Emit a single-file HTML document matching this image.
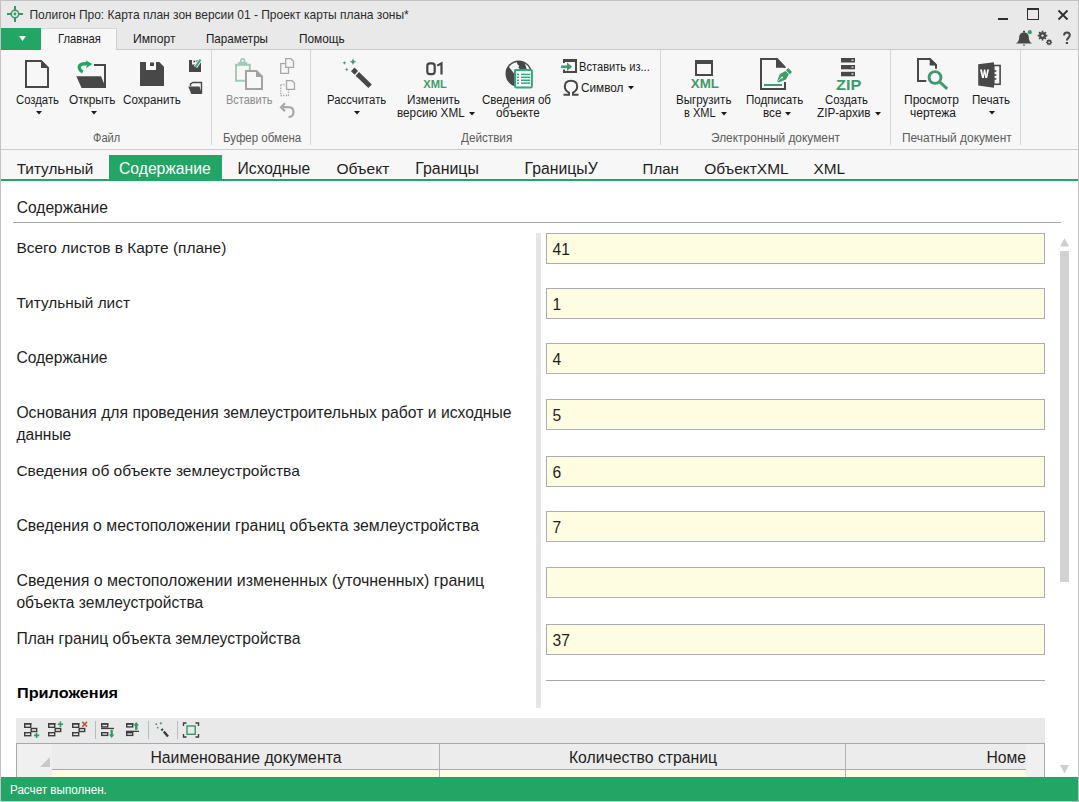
<!DOCTYPE html>
<html><head><meta charset="utf-8"><style>
html,body{margin:0;padding:0;width:1079px;height:802px;overflow:hidden;background:#fff}
body{position:relative;font-family:"Liberation Sans",sans-serif}
body>div{position:absolute}
.t{white-space:nowrap;line-height:1}
</style></head><body>
<div style="left:0px;top:0px;width:1079px;height:802px;background:#ffffff"></div>
<div style="left:1px;top:1px;width:1077px;height:48px;background:#e9e9e9"></div>
<div style="left:1px;top:50px;width:1077px;height:99px;background:#f7f7f7"></div>
<div style="left:1px;top:149px;width:1077px;height:1px;background:#cdcdcd"></div>
<div style="left:1px;top:150px;width:1077px;height:29px;background:#f7f7f7"></div>
<div class="t" style="left:29.50px;top:8.85px;font-size:11.99px;color:#2b2b2b;">Полигон Про: Карта план зон версии 01 - Проект карты плана зоны*</div>
<div style="left:1px;top:28px;width:40px;height:22px;background:#22a565"></div>
<div style="left:41px;top:28px;width:76px;height:22px;background:#f7f7f7;border-top:1px solid #d8d8d8;border-right:1px solid #d0d0d0;box-sizing:border-box"></div>
<div style="left:117px;top:49px;width:961px;height:1px;background:#c9c9c9"></div>
<svg style="position:absolute;left:19px;top:36px" width="8" height="6" viewBox="0 0 8 6"><path d="M0,0 H7 L3.5,5 Z" fill="#fff"/></svg>
<div class="t" style="left:57.50px;top:33.10px;font-size:12.40px;color:#1a1a1a;transform:scaleX(0.9071);transform-origin:0 0;">Главная</div>
<div class="t" style="left:132.50px;top:33.10px;font-size:12.40px;color:#1a1a1a;transform:scaleX(0.9807);transform-origin:0 0;">Импорт</div>
<div class="t" style="left:205.50px;top:33.10px;font-size:12.40px;color:#1a1a1a;transform:scaleX(0.9381);transform-origin:0 0;">Параметры</div>
<div class="t" style="left:298.80px;top:33.10px;font-size:12.40px;color:#1a1a1a;transform:scaleX(0.9569);transform-origin:0 0;">Помощь</div>
<div style="left:211px;top:50px;width:1px;height:95px;background:#d6d6d6"></div>
<div style="left:310px;top:50px;width:1px;height:95px;background:#d6d6d6"></div>
<div style="left:660px;top:50px;width:1px;height:95px;background:#d6d6d6"></div>
<div style="left:890px;top:50px;width:1px;height:95px;background:#d6d6d6"></div>
<div style="left:1020px;top:50px;width:1px;height:95px;background:#d6d6d6"></div>
<div class="t" style="left:16.00px;top:94.29px;font-size:12.30px;color:#1a1a1a;transform:scaleX(0.9200);transform-origin:0 0;">Создать</div>
<div class="t" style="left:68.80px;top:94.29px;font-size:12.30px;color:#1a1a1a;transform:scaleX(0.9611);transform-origin:0 0;">Открыть</div>
<div class="t" style="left:123.00px;top:94.29px;font-size:12.30px;color:#1a1a1a;transform:scaleX(0.9455);transform-origin:0 0;">Сохранить</div>
<div class="t" style="left:225.60px;top:94.29px;font-size:12.30px;color:#8c8c8c;transform:scaleX(0.8897);transform-origin:0 0;">Вставить</div>
<div class="t" style="left:326.70px;top:94.29px;font-size:12.30px;color:#1a1a1a;transform:scaleX(0.9236);transform-origin:0 0;">Рассчитать</div>
<div class="t" style="left:406.70px;top:94.29px;font-size:12.30px;color:#1a1a1a;transform:scaleX(0.9554);transform-origin:0 0;">Изменить</div>
<div class="t" style="left:396.70px;top:107.29px;font-size:12.30px;color:#1a1a1a;transform:scaleX(0.9531);transform-origin:0 0;">версию XML</div>
<div class="t" style="left:482.00px;top:94.29px;font-size:12.30px;color:#1a1a1a;transform:scaleX(0.9389);transform-origin:0 0;">Сведения об</div>
<div class="t" style="left:495.60px;top:107.29px;font-size:12.30px;color:#1a1a1a;transform:scaleX(0.9569);transform-origin:0 0;">объекте</div>
<div class="t" style="left:579.00px;top:61.29px;font-size:12.30px;color:#1a1a1a;transform:scaleX(0.9043);transform-origin:0 0;">Вставить из...</div>
<div class="t" style="left:581.00px;top:82.29px;font-size:12.30px;color:#1a1a1a;transform:scaleX(0.9585);transform-origin:0 0;">Символ</div>
<div class="t" style="left:676.00px;top:94.29px;font-size:12.30px;color:#1a1a1a;transform:scaleX(0.9403);transform-origin:0 0;">Выгрузить</div>
<div class="t" style="left:684.00px;top:107.29px;font-size:12.30px;color:#1a1a1a;transform:scaleX(0.8967);transform-origin:0 0;">в XML</div>
<div class="t" style="left:745.60px;top:94.29px;font-size:12.30px;color:#1a1a1a;transform:scaleX(0.9428);transform-origin:0 0;">Подписать</div>
<div class="t" style="left:762.80px;top:107.29px;font-size:12.30px;color:#1a1a1a;transform:scaleX(0.9550);transform-origin:0 0;">все</div>
<div class="t" style="left:825.00px;top:94.29px;font-size:12.30px;color:#1a1a1a;transform:scaleX(0.9200);transform-origin:0 0;">Создать</div>
<div class="t" style="left:817.00px;top:107.29px;font-size:12.30px;color:#1a1a1a;transform:scaleX(0.9515);transform-origin:0 0;">ZIP-архив</div>
<div class="t" style="left:904.00px;top:94.29px;font-size:12.30px;color:#1a1a1a;transform:scaleX(0.9795);transform-origin:0 0;">Просмотр</div>
<div class="t" style="left:910.00px;top:107.29px;font-size:12.30px;color:#1a1a1a;transform:scaleX(0.9765);transform-origin:0 0;">чертежа</div>
<div class="t" style="left:971.60px;top:94.29px;font-size:12.30px;color:#1a1a1a;transform:scaleX(0.9433);transform-origin:0 0;">Печать</div>
<div class="t" style="left:93.30px;top:132.29px;font-size:12.30px;color:#5c5c5c;transform:scaleX(0.8989);transform-origin:0 0;">Файл</div>
<div class="t" style="left:222.50px;top:132.29px;font-size:12.30px;color:#5c5c5c;transform:scaleX(0.9350);transform-origin:0 0;">Буфер обмена</div>
<div class="t" style="left:461.00px;top:132.29px;font-size:12.30px;color:#5c5c5c;transform:scaleX(0.9504);transform-origin:0 0;">Действия</div>
<div class="t" style="left:711.00px;top:132.29px;font-size:12.30px;color:#5c5c5c;transform:scaleX(0.9680);transform-origin:0 0;">Электронный документ</div>
<div class="t" style="left:901.80px;top:132.29px;font-size:12.30px;color:#5c5c5c;transform:scaleX(0.9708);transform-origin:0 0;">Печатный документ</div>
<svg style="position:absolute;left:35.5px;top:111px" width="6" height="4" viewBox="0 0 6 4"><path d="M0,0 H6 L3,3.4 Z" fill="#1a1a1a"/></svg>
<svg style="position:absolute;left:91.0px;top:111px" width="6" height="4" viewBox="0 0 6 4"><path d="M0,0 H6 L3,3.4 Z" fill="#1a1a1a"/></svg>
<svg style="position:absolute;left:353.5px;top:111px" width="6" height="4" viewBox="0 0 6 4"><path d="M0,0 H6 L3,3.4 Z" fill="#1a1a1a"/></svg>
<svg style="position:absolute;left:469.0px;top:112px" width="6" height="4" viewBox="0 0 6 4"><path d="M0,0 H6 L3,3.4 Z" fill="#1a1a1a"/></svg>
<svg style="position:absolute;left:627.5px;top:86px" width="6" height="4" viewBox="0 0 6 4"><path d="M0,0 H6 L3,3.4 Z" fill="#1a1a1a"/></svg>
<svg style="position:absolute;left:721.0px;top:112px" width="6" height="4" viewBox="0 0 6 4"><path d="M0,0 H6 L3,3.4 Z" fill="#1a1a1a"/></svg>
<svg style="position:absolute;left:784.8px;top:112px" width="6" height="4" viewBox="0 0 6 4"><path d="M0,0 H6 L3,3.4 Z" fill="#1a1a1a"/></svg>
<svg style="position:absolute;left:874.9px;top:112px" width="6" height="4" viewBox="0 0 6 4"><path d="M0,0 H6 L3,3.4 Z" fill="#1a1a1a"/></svg>
<svg style="position:absolute;left:988.5px;top:111px" width="6" height="4" viewBox="0 0 6 4"><path d="M0,0 H6 L3,3.4 Z" fill="#1a1a1a"/></svg>
<div style="left:109px;top:155px;width:113px;height:24px;background:#22a565"></div>
<div style="left:1px;top:179px;width:1077px;height:2px;background:#22a565"></div>
<div class="t" style="left:16.70px;top:161.03px;font-size:15.32px;color:#1e1e1e;">Титульный</div>
<div class="t" style="left:119.00px;top:160.71px;font-size:15.71px;color:#ffffff;">Содержание</div>
<div class="t" style="left:237.60px;top:160.77px;font-size:15.63px;color:#1e1e1e;">Исходные</div>
<div class="t" style="left:336.40px;top:160.85px;font-size:15.54px;color:#1e1e1e;">Объект</div>
<div class="t" style="left:415.20px;top:160.50px;font-size:15.95px;color:#1e1e1e;">Границы</div>
<div class="t" style="left:524.60px;top:160.64px;font-size:15.78px;color:#1e1e1e;">ГраницыУ</div>
<div class="t" style="left:642.60px;top:161.25px;font-size:15.06px;color:#1e1e1e;">План</div>
<div class="t" style="left:704.20px;top:160.90px;font-size:15.48px;color:#1e1e1e;">ОбъектXML</div>
<div class="t" style="left:813.40px;top:160.98px;font-size:15.38px;color:#1e1e1e;">XML</div>
<div class="t" style="left:16.70px;top:199.79px;font-size:15.60px;color:#1e1e1e;">Содержание</div>
<div style="left:13px;top:222px;width:1048px;height:1px;background:#a8a8a8"></div>
<div style="left:536px;top:233px;width:5px;height:475px;background:#e6e6e6"></div>
<div class="t" style="left:16.40px;top:239.90px;font-size:15.48px;color:#1e1e1e;">Всего листов в Карте (плане)</div>
<div style="left:546px;top:233px;width:499px;height:31px;background:#fefde1;border:1px solid #aaacb4;box-sizing:border-box"></div>
<div class="t" style="left:552.50px;top:241.79px;font-size:15.60px;color:#1e1e1e;">41</div>
<div class="t" style="left:16.40px;top:294.98px;font-size:15.38px;color:#1e1e1e;">Титульный лист</div>
<div style="left:546px;top:288px;width:499px;height:31px;background:#fefde1;border:1px solid #aaacb4;box-sizing:border-box"></div>
<div class="t" style="left:552.50px;top:296.79px;font-size:15.60px;color:#1e1e1e;">1</div>
<div class="t" style="left:16.40px;top:349.79px;font-size:15.60px;color:#1e1e1e;">Содержание</div>
<div style="left:546px;top:343px;width:499px;height:31px;background:#fefde1;border:1px solid #aaacb4;box-sizing:border-box"></div>
<div class="t" style="left:552.50px;top:351.79px;font-size:15.60px;color:#1e1e1e;">4</div>
<div class="t" style="left:16.40px;top:404.68px;font-size:15.73px;color:#1e1e1e;">Основания для проведения землеустроительных работ и исходные</div>
<div class="t" style="left:16.40px;top:426.79px;font-size:15.60px;color:#1e1e1e;">данные</div>
<div style="left:546px;top:399px;width:499px;height:31px;background:#fefde1;border:1px solid #aaacb4;box-sizing:border-box"></div>
<div class="t" style="left:552.50px;top:407.79px;font-size:15.60px;color:#1e1e1e;">5</div>
<div class="t" style="left:16.40px;top:462.83px;font-size:15.55px;color:#1e1e1e;">Сведения об объекте землеустройства</div>
<div style="left:546px;top:456px;width:499px;height:31px;background:#fefde1;border:1px solid #aaacb4;box-sizing:border-box"></div>
<div class="t" style="left:552.50px;top:464.79px;font-size:15.60px;color:#1e1e1e;">6</div>
<div class="t" style="left:16.40px;top:517.60px;font-size:15.83px;color:#1e1e1e;">Сведения о местоположении границ объекта землеустройства</div>
<div style="left:546px;top:511px;width:499px;height:31px;background:#fefde1;border:1px solid #aaacb4;box-sizing:border-box"></div>
<div class="t" style="left:552.50px;top:519.79px;font-size:15.60px;color:#1e1e1e;">7</div>
<div class="t" style="left:16.40px;top:573.49px;font-size:15.96px;color:#1e1e1e;">Сведения о местоположении измененных (уточненных) границ</div>
<div class="t" style="left:16.40px;top:594.79px;font-size:15.60px;color:#1e1e1e;">объекта землеустройства</div>
<div style="left:546px;top:567px;width:499px;height:31px;background:#fefde1;border:1px solid #aaacb4;box-sizing:border-box"></div>
<div class="t" style="left:16.40px;top:630.72px;font-size:15.69px;color:#1e1e1e;">План границ объекта землеустройства</div>
<div style="left:546px;top:624px;width:499px;height:31px;background:#fefde1;border:1px solid #aaacb4;box-sizing:border-box"></div>
<div class="t" style="left:552.50px;top:632.79px;font-size:15.60px;color:#1e1e1e;">37</div>
<div style="left:546px;top:680px;width:499px;height:1px;background:#a8a8a8"></div>
<div class="t" style="left:16.60px;top:685.16px;font-size:15.40px;color:#000000;font-weight:bold;transform:scaleX(1.0565);transform-origin:0 0;">Приложения</div>
<div style="left:16px;top:718px;width:1029px;height:25px;background:#e9e9e9"></div>
<div style="left:16px;top:743px;width:1029px;height:34px;background:#ffffff;border:1px solid #a7a9b1;border-bottom:none;box-sizing:border-box"></div>
<div style="left:17px;top:744px;width:1027px;height:25px;background:#ececec"></div>
<div style="left:52px;top:769px;width:974px;height:1px;background:#a9a9a9"></div>
<div style="left:1026px;top:744px;width:18px;height:33px;background:#f0f0f0"></div>
<div style="left:17px;top:744px;width:35px;height:33px;background:#f0f0f0"></div>
<div style="left:52px;top:769px;width:1px;height:8px;background:#a9abb3"></div>
<div style="left:52px;top:770px;width:974px;height:7px;background:#fefde3"></div>
<div style="left:439px;top:744px;width:1px;height:33px;background:#b0b0b0"></div>
<div style="left:845px;top:744px;width:1px;height:33px;background:#b0b0b0"></div>
<svg style="position:absolute;left:40px;top:757px" width="11" height="11" viewBox="0 0 11 11"><path d="M10,0 V10 H0 Z" fill="#c9c9c9"/></svg>
<div class="t" style="left:150.40px;top:749.61px;font-size:15.82px;color:#1e1e1e;">Наименование документа</div>
<div class="t" style="left:568.90px;top:749.65px;font-size:15.78px;color:#1e1e1e;">Количество страниц</div>
<div class="t" style="left:986.50px;top:749.71px;font-size:15.70px;color:#1e1e1e;">Номе</div>
<svg style="position:absolute;left:1060px;top:238px" width="10" height="9" viewBox="0 0 10 9"><path d="M0,8.5 L4.5,0 L9,8.5 Z" fill="#cfcfcf"/></svg>
<div style="left:1060px;top:251px;width:9px;height:331px;background:#d2d2d2"></div>
<svg style="position:absolute;left:1060px;top:765px" width="10" height="9" viewBox="0 0 10 9"><path d="M0,0 H9 L4.5,8.5 Z" fill="#cfcfcf"/></svg>
<div style="left:1px;top:777px;width:1077px;height:24px;background:#22a565"></div>
<div class="t" style="left:9.60px;top:784.00px;font-size:12.40px;color:#ffffff;transform:scaleX(0.9409);transform-origin:0 0;">Расчет выполнен.</div>
<svg style="position:absolute;left:0;top:0" width="1079" height="802" viewBox="0 0 1079 802">
<!-- title icon -->
<g fill="#3d9466">
<circle cx="15" cy="14" r="3.7" fill="none" stroke="#3d9466" stroke-width="1.5"/>
<circle cx="15" cy="14" r="1.4"/>
<rect x="7" y="13" width="4" height="2"/><rect x="19" y="13" width="4" height="2"/>
<rect x="14" y="6" width="2" height="4"/><rect x="14" y="18" width="2" height="4"/>
</g>
<!-- window buttons -->
<rect x="998" y="18" width="10" height="2" fill="#2e2e2e"/>
<rect x="1027.5" y="9" width="11" height="10.5" fill="none" stroke="#2e2e2e" stroke-width="1"/>
<rect x="1027" y="8" width="12" height="2" fill="#2e2e2e"/>
<path d="M1058.5,10.5 L1067.5,19.5 M1067.5,10.5 L1058.5,19.5" stroke="#2e2e2e" stroke-width="1.8"/>
<!-- bell -->
<path d="M1016,43.6 C1017.8,42.2 1019.2,40.5 1019.2,37.2 C1019.2,34.2 1021,32.5 1024,32.5 C1027,32.5 1028.8,34.2 1028.8,37.2 C1028.8,40.5 1030.2,42.2 1032,43.6 Z" fill="#474747"/>
<rect x="1023" y="30.8" width="2" height="1.8" fill="#474747"/>
<rect x="1023" y="44.6" width="2" height="1" fill="#474747"/>
<circle cx="1029.8" cy="32.2" r="2.1" fill="#3aa06a"/>
<!-- gears -->
<g fill="#474747">
<circle cx="1042.5" cy="35.6" r="3.4"/>
<path d="M1042.5,30.8 V40.4 M1037.7,35.6 H1047.3 M1039.1,32.2 L1045.9,39 M1045.9,32.2 L1039.1,39" stroke="#474747" stroke-width="1.7"/>
<circle cx="1042.5" cy="35.6" r="1.2" fill="#e9e9e9"/>
<circle cx="1049.1" cy="42.3" r="2.3"/>
<path d="M1049.1,39.3 V45.3 M1046.1,42.3 H1052.1 M1047,40.2 L1051.2,44.4 M1051.2,40.2 L1047,44.4" stroke="#474747" stroke-width="1.2"/>
<circle cx="1049.1" cy="42.3" r="0.9" fill="#e9e9e9"/>
</g>
<path d="M1064.1,35.6 C1064.1,33.4 1065.4,32.4 1066.9,32.4 C1068.6,32.4 1069.8,33.6 1069.8,35.2 C1069.8,37.6 1066.9,38 1066.9,40.6" fill="none" stroke="#474747" stroke-width="2"/>
<rect x="1065.8" y="42" width="2.2" height="2" fill="#474747"/>

<!-- Создать: doc -->
<path d="M26,61 H41 L48,68 V87 H26 Z" fill="none" stroke="#484848" stroke-width="2"/>
<path d="M41,60 L49,68 H41 Z" fill="#484848"/>
<!-- Открыть -->
<path d="M94,65 H105 V88" fill="none" stroke="#484848" stroke-width="2"/>
<path d="M76.3,76.2 H101 L106,88 H81.6 Z" fill="#484848"/>
<path d="M82.8,71.8 C79.5,70.5 78.5,67.5 79.8,65.5 C81,63.8 83,63.7 85,63.7 H88.5" fill="none" stroke="#22a560" stroke-width="3.4"/>
<path d="M85.6,60.2 L92.2,64.1 L86,68.2 L87.5,64.1 Z" fill="#22a560"/>
<!-- Сохранить -->
<path d="M140,62 H159.3 L164,66.7 V86 H140 Z" fill="#484848"/>
<rect x="146" y="62" width="10" height="8" fill="#f7f7f7"/>
<rect x="150" y="62.5" width="4" height="3.5" fill="#484848"/>
<!-- small save-edit -->
<rect x="189" y="60" width="12" height="12" fill="#484848"/>
<rect x="192" y="60" width="4.5" height="4.5" fill="#f7f7f7"/>
<rect x="193.5" y="60.5" width="1.8" height="1.8" fill="#484848"/>
<path d="M195.5,67 L200.5,59.5" stroke="#f7f7f7" stroke-width="4"/>
<path d="M195.5,67 L200.5,59.5" stroke="#4aa27a" stroke-width="2.2"/>
<!-- small folder -->
<path d="M190.5,86 V84 L193,82.5 H201.5 V93.5" fill="none" stroke="#484848" stroke-width="1.4"/>
<path d="M188.3,86.6 H199.5 L202,94 H191.3 Z" fill="#484848"/>

<!-- Вставить (disabled) -->
<path d="M245,80.8 H236 V64.8 H249.8 V70" fill="none" stroke="#a3cbb4" stroke-width="2"/>
<path d="M238.2,62 H247.2 V65.5 H238.2 Z" fill="#a3cbb4"/>
<circle cx="242.7" cy="60.6" r="2.7" fill="#a3cbb4"/>
<circle cx="242.7" cy="60.8" r="1.1" fill="#f7f7f7"/>
<path d="M246,71 H256.5 L262,76.5 V89 H246 Z" fill="#f7f7f7" stroke="#a2a2a2" stroke-width="2"/>
<path d="M256,70 L263,77 H256 Z" fill="#a2a2a2"/>
<!-- copy -->
<g fill="#f7f7f7" stroke="#a8a8a8" stroke-width="1.3">
<path d="M280.7,63.7 H288.5 V73.3 H280.7 Z"/>
<path d="M285.7,58.7 H291 L293.5,61.2 V67.3 H285.7 Z"/>
<path d="M286.5,80.7 H292 L294.5,83.2 V89.3 H286.5 Z"/>
</g>
<path d="M280.7,85 V95.5 H288.5 V90" fill="none" stroke="#a8a8a8" stroke-width="1.3" stroke-dasharray="1.3,1.3"/>
<path d="M280.7,84.7 H285" fill="none" stroke="#a8a8a8" stroke-width="1.3" stroke-dasharray="1.3,1.3"/>
<path d="M283,107.2 H288.5 C292,107.2 293.5,109.5 293.5,112.3 C293.5,115 291.5,117 288.5,117" fill="none" stroke="#a8a8a8" stroke-width="2.2"/>
<path d="M285,103.3 L281,107.2 L285,111.1" fill="none" stroke="#a8a8a8" stroke-width="2.2"/>

<!-- Рассчитать: wand -->
<g fill="#3f9a6d">
<path d="M353,58.5 L354,60.7 L356.2,61.7 L354,62.7 L353,64.9 L352,62.7 L349.8,61.7 L352,60.7 Z"/>
<path d="M344.4,60.9 L345,62.2 L346.3,62.8 L345,63.4 L344.4,64.7 L343.8,63.4 L342.5,62.8 L343.8,62.2 Z"/>
<path d="M346.8,67.6 L347.4,68.9 L348.7,69.5 L347.4,70.1 L346.8,71.4 L346.2,70.1 L344.9,69.5 L346.2,68.9 Z"/>
</g>
<g transform="translate(354.6,71.2) rotate(44)">
<rect x="-2.6" y="-2.5" width="5" height="5" fill="#484848"/>
<rect x="3.8" y="-2.5" width="17.8" height="5" fill="#484848"/>
</g>
<!-- 01 XML -->
<rect x="427.3" y="63.4" width="7.4" height="10.8" rx="2.6" fill="none" stroke="#454545" stroke-width="2.2"/>
<path d="M437.2,65.6 L441.5,63.3 V74.6" fill="none" stroke="#454545" stroke-width="2.2"/>
<text x="423.3" y="87.7" font-family="Liberation Sans" font-weight="bold" font-size="11" fill="#3f9a6d" textLength="23.5" lengthAdjust="spacingAndGlyphs">XML</text>
<!-- globe -->
<circle cx="518.7" cy="73.7" r="13.2" fill="#484848"/>
<path d="M509,67 A11.6,11.6 0 0 1 516.8,62.2 L517.6,64.5 L519.1,65.8 L518.4,67.4 L519.9,69.2 H514.5 V74 Z" fill="#f7f7f7"/>
<path d="M525,63.5 A11.6,11.6 0 0 1 529.6,69 H526.6 Z" fill="#f7f7f7"/>
<rect x="515.1" y="69.9" width="16.8" height="17.7" rx="1.3" fill="#fff" stroke="#2ea97c" stroke-width="2"/>
<g fill="#2ea97c">
<rect x="517" y="73.7" width="2" height="1.5"/><rect x="521" y="73.7" width="9.2" height="1.5"/>
<rect x="517" y="76.6" width="2" height="1.5"/><rect x="521" y="76.6" width="9.2" height="1.5"/>
<rect x="517" y="79.5" width="2" height="1.5"/><rect x="521" y="79.5" width="9.2" height="1.5"/>
<rect x="517" y="82.4" width="2" height="1.5"/><rect x="521" y="82.4" width="9.2" height="1.5"/>
</g>
<!-- Вставить из -->
<rect x="563" y="59" width="14" height="3" fill="#484848"/>
<rect x="575" y="59" width="2" height="14" fill="#484848"/>
<rect x="563" y="71" width="14" height="2" fill="#484848"/>
<rect x="563" y="59" width="2" height="4" fill="#484848"/>
<rect x="563" y="69.5" width="2" height="3.5" fill="#484848"/>
<rect x="561" y="65.5" width="7" height="2.6" fill="#3f9a6d"/>
<path d="M567,62.5 L572.2,66.8 L567,71 Z" fill="#3f9a6d"/>
<!-- Omega -->
<path d="M563.5,94.8 H569 V92.6 C566.2,91.2 564.8,88.8 564.8,86.3 C564.8,82.6 567.6,80.8 571,80.8 C574.4,80.8 577.2,82.6 577.2,86.3 C577.2,88.8 575.8,91.2 573,92.6 V94.8 H578.5" fill="none" stroke="#484848" stroke-width="2"/>

<!-- Выгрузить в XML -->
<rect x="696" y="61" width="16" height="14" fill="none" stroke="#484848" stroke-width="2"/>
<rect x="695" y="60" width="18" height="4" fill="#484848"/>
<text x="690.8" y="87.9" font-family="Liberation Sans" font-weight="bold" font-size="13.2" fill="#3f9a6d" textLength="28.2" lengthAdjust="spacingAndGlyphs">XML</text>
<!-- Подписать -->
<path d="M785,82 V89 H761 V59 H777 L785,67.5" fill="none" stroke="#484848" stroke-width="2"/>
<path d="M776,58 L786,67.7 H776 Z" fill="#484848"/>
<rect x="764" y="84" width="18" height="2" fill="#3f9a6d"/>
<path d="M777,81.6 L779.8,74 L785.5,71 L788.8,74.2 L786,79.4 L778.3,82.4 Z" fill="#3f9a6d"/>
<circle cx="782" cy="77.6" r="1" fill="#f7f7f7"/>
<path d="M777.5,81.5 L781.5,77.8" stroke="#f7f7f7" stroke-width="0.8"/>
<path d="M786,70.2 L788.3,68 L792,72 L789.7,74.3 Z" fill="#3f9a6d"/>
<!-- ZIP -->
<rect x="841" y="58" width="14" height="4.5" fill="#484848"/>
<rect x="841" y="65" width="14" height="4.3" fill="#484848"/>
<rect x="841" y="71.8" width="14" height="4.5" fill="#484848"/>
<rect x="851.5" y="59.6" width="2" height="1.2" fill="#f7f7f7"/>
<rect x="851.5" y="66.5" width="2" height="1.2" fill="#f7f7f7"/>
<rect x="851.5" y="73.4" width="2" height="1.2" fill="#f7f7f7"/>
<text x="836" y="90" font-family="Liberation Sans" font-weight="bold" font-size="14.8" fill="#3f9a6d" textLength="25.3" lengthAdjust="spacingAndGlyphs">ZIP</text>
<!-- Просмотр -->
<path d="M926.3,81 H918 V59 H930 L936,65 V68.8" fill="none" stroke="#484848" stroke-width="2"/>
<path d="M929.7,58 L937,65.5 H929.7 Z" fill="#484848"/>
<circle cx="935" cy="77.5" r="5.9" fill="none" stroke="#3f9a6d" stroke-width="2.9"/>
<path d="M939.8,82 L947.2,88.8" stroke="#3f9a6d" stroke-width="3"/>
<!-- Печать: Word -->
<rect x="993.8" y="65.5" width="6.3" height="18.8" fill="#f7f7f7" stroke="#484848" stroke-width="1.6"/>
<g fill="#484848"><rect x="993.5" y="70.2" width="2.8" height="1.6"/><rect x="993.5" y="74.2" width="2.8" height="1.6"/><rect x="993.5" y="78.1" width="2.8" height="1.6"/></g>
<path d="M978.2,64.2 L994,62.2 V87.7 L978.2,85.6 Z" fill="#484848"/>
<path d="M980,69.5 H982 L983,75 L983.9,69.5 H985.3 L986.2,75 L987.1,69.5 H989 L987.2,78 H985.3 L984.6,73.4 L983.9,78 H982 Z" fill="#fff"/>
<g fill="none" stroke="#3c3c3c" stroke-width="1.4">
<rect x="24.7" y="723.7" width="6" height="3.6"/>
<rect x="31.2" y="728.5" width="5.5" height="3"/>
<rect x="24.7" y="732.7" width="6" height="3"/>
</g><rect x="24" y="723" width="7.4" height="1.6" fill="#3c3c3c"/><path d="M36.6,732.7 V738 M34,735.4 H39.2" stroke="#2f9a63" stroke-width="1.6"/><g fill="none" stroke="#3c3c3c" stroke-width="1.4">
<rect x="48.7" y="723.7" width="6" height="3.6"/>
<rect x="55.2" y="728.5" width="5.5" height="3"/>
<rect x="48.7" y="732.7" width="6" height="3"/>
</g><rect x="48" y="723" width="7.4" height="1.6" fill="#3c3c3c"/><path d="M60.4,721.5 V727 M57.7,724.3 H63.1" stroke="#2f9a63" stroke-width="1.6"/><g fill="none" stroke="#3c3c3c" stroke-width="1.4">
<rect x="72.7" y="723.7" width="6" height="3.6"/>
<rect x="79.2" y="728.5" width="5.5" height="3"/>
<rect x="72.7" y="732.7" width="6" height="3"/>
</g><rect x="72" y="723" width="7.4" height="1.6" fill="#3c3c3c"/><path d="M82.3,721.9 L87,726.6 M87,721.9 L82.3,726.6" stroke="#c0593a" stroke-width="1.6"/><rect x="95" y="721" width="1" height="18" fill="#b4bcc6"/><g fill="none" stroke="#3c3c3c" stroke-width="1.4"><rect x="101.7" y="723.9" width="6" height="3"/><rect x="101.7" y="732.7" width="6" height="2.7"/></g>
<rect x="101" y="723.2" width="7.4" height="1.4" fill="#3c3c3c"/><rect x="101" y="727.8" width="13" height="1.3" fill="#3c3c3c"/>
<path d="M110.5,729.8 H112.8 V734.5 H114.3 L111.65,738 L109,734.5 H110.5 Z" fill="#2f9a63"/><g fill="none" stroke="#3c3c3c" stroke-width="1.4"><rect x="126.7" y="723.9" width="6" height="3"/><rect x="126.7" y="732.7" width="6" height="2.7"/></g>
<rect x="126" y="723.2" width="7.4" height="1.4" fill="#3c3c3c"/><rect x="126" y="730.7" width="13" height="1.3" fill="#3c3c3c"/>
<path d="M135,729.8 H137.5 V725.5 H139 L136.25,722 L133.5,725.5 H135 Z" fill="#2f9a63"/><rect x="148" y="721" width="1" height="18" fill="#b4bcc6"/><g fill="#3f9a6d"><circle cx="156.2" cy="724.2" r="0.9"/><circle cx="160.8" cy="723.3" r="1.1"/><circle cx="157.7" cy="727.7" r="0.9"/></g>
<path d="M161.5,729 L162.8,730.3" stroke="#3c3c3c" stroke-width="2.4"/><path d="M163.8,731.5 L168,736.5" stroke="#3c3c3c" stroke-width="2.4"/><rect x="177" y="721" width="1" height="18" fill="#b4bcc6"/><path d="M183.5,726 V723 H186.5 M195.5,723 H198.5 V726 M198.5,734 V737 H195.5 M186.5,737 H183.5 V734" fill="none" stroke="#3c3c3c" stroke-width="1.4"/>
<rect x="187" y="726" width="8.2" height="8.3" fill="none" stroke="#2f9a63" stroke-width="1.4"/></svg>
<div style="left:0px;top:0px;width:1079px;height:802px;border:1px solid #c2c2c2;box-sizing:border-box;background:transparent"></div>
</body></html>
